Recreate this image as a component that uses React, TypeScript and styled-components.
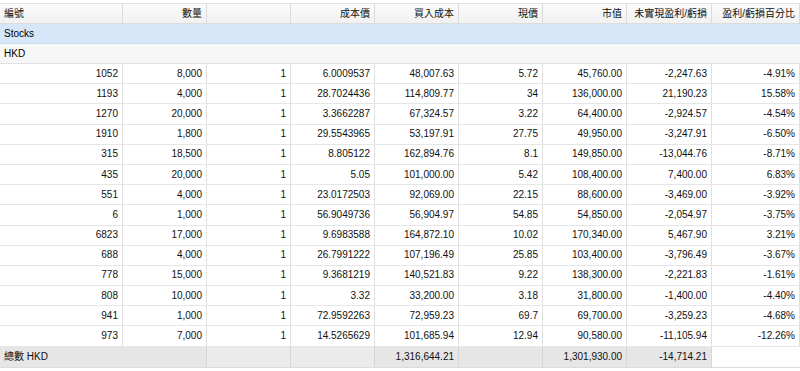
import styled, { createGlobalStyle } from "styled-components";

const GlobalStyle = createGlobalStyle`
  html, body {
    margin: 0;
    padding: 0;
    background: #ffffff;
  }
  body {
    font-family: "Liberation Sans", "Noto Sans CJK TC", sans-serif;
    font-size: 10px;
    color: #111111;
  }
`;

const COLUMNS = "123px 84px 84px 84px 84px 84px 84px 85px 88px";

const headers = [
  "編號",
  "數量",
  "",
  "成本價",
  "買入成本",
  "現價",
  "市值",
  "未實現盈利/虧損",
  "盈利/虧損百分比",
];

const rows: string[][] = [
  ["1052", "8,000", "1", "6.0009537", "48,007.63", "5.72", "45,760.00", "-2,247.63", "-4.91%"],
  ["1193", "4,000", "1", "28.7024436", "114,809.77", "34", "136,000.00", "21,190.23", "15.58%"],
  ["1270", "20,000", "1", "3.3662287", "67,324.57", "3.22", "64,400.00", "-2,924.57", "-4.54%"],
  ["1910", "1,800", "1", "29.5543965", "53,197.91", "27.75", "49,950.00", "-3,247.91", "-6.50%"],
  ["315", "18,500", "1", "8.805122", "162,894.76", "8.1", "149,850.00", "-13,044.76", "-8.71%"],
  ["435", "20,000", "1", "5.05", "101,000.00", "5.42", "108,400.00", "7,400.00", "6.83%"],
  ["551", "4,000", "1", "23.0172503", "92,069.00", "22.15", "88,600.00", "-3,469.00", "-3.92%"],
  ["6", "1,000", "1", "56.9049736", "56,904.97", "54.85", "54,850.00", "-2,054.97", "-3.75%"],
  ["6823", "17,000", "1", "9.6983588", "164,872.10", "10.02", "170,340.00", "5,467.90", "3.21%"],
  ["688", "4,000", "1", "26.7991222", "107,196.49", "25.85", "103,400.00", "-3,796.49", "-3.67%"],
  ["778", "15,000", "1", "9.3681219", "140,521.83", "9.22", "138,300.00", "-2,221.83", "-1.61%"],
  ["808", "10,000", "1", "3.32", "33,200.00", "3.18", "31,800.00", "-1,400.00", "-4.40%"],
  ["941", "1,000", "1", "72.9592263", "72,959.23", "69.7", "69,700.00", "-3,259.23", "-4.68%"],
  ["973", "7,000", "1", "14.5265629", "101,685.94", "12.94", "90,580.00", "-11,105.94", "-12.26%"],
];

const Page = styled.div`
  padding-top: 3px;
  width: 800px;
`;

const Grid = styled.div`
  border-top: 1px solid #e2e2e2;
`;

const Row = styled.div<{ $bg?: string; $h?: number; $line?: string }>`
  display: grid;
  grid-template-columns: ${COLUMNS};
  height: ${(p) => p.$h ?? 20}px;
  background: ${(p) => p.$bg ?? "#ffffff"};
  border-bottom: 1px solid ${(p) => p.$line ?? "#e6e6e6"};
  box-sizing: border-box;
`;

const HeaderRow = styled(Row)`
  background: linear-gradient(to bottom, #fbfbfb, #f1f1f1);
`;

const Cell = styled.div<{ $left?: boolean; $span?: number; $bg?: string; $noLine?: boolean }>`
  display: flex;
  align-items: center;
  justify-content: ${(p) => (p.$left ? "flex-start" : "flex-end")};
  padding: 0 4px;
  border-right: ${(p) => (p.$noLine ? "none" : "1px solid #e0e0e0")};
  grid-column: span ${(p) => p.$span ?? 1};
  background: ${(p) => p.$bg ?? "transparent"};
  white-space: nowrap;
  overflow: hidden;
  line-height: 1;
`;

const HeadCell = styled(Cell)`
  border-right-color: #dadada;
`;

const GroupCell = styled(Cell)`
  grid-column: 1 / -1;
  border-right: none;
  color: #000000;
`;

const TotalCell = styled(Cell)`
  border-right-color: #d6d6d6;
`;

export default function App() {
  return (
    <>
      <GlobalStyle />
      <Page>
        <Grid>
          <HeaderRow $line="#dcdcdc">
            {headers.map((h, i) => (
              <HeadCell key={i} $left={i === 0}>
                {h}
              </HeadCell>
            ))}
          </HeaderRow>
          <Row $bg="#d5e7f9" $line="#c9dcef">
            <GroupCell $left>Stocks</GroupCell>
          </Row>
          <Row $bg="#f7f7f7" $line="#e0e0e0">
            <GroupCell $left>HKD</GroupCell>
          </Row>
          {rows.map((r) => (
            <Row key={r[0]} $h={20.2}>
              {r.map((v, i) => (
                <Cell key={i}>{v}</Cell>
              ))}
            </Row>
          ))}
          <Row $bg="#ffffff" $h={21} $line="#dcdcdc">
            <TotalCell $left $span={2} $bg="#e6e6e6">
              總數 HKD
            </TotalCell>
            <TotalCell $bg="#ebebeb" />
            <TotalCell $bg="#ebebeb" />
            <TotalCell $bg="#e6e6e6">1,316,644.21</TotalCell>
            <TotalCell $bg="#e6e6e6" />
            <TotalCell $bg="#e6e6e6">1,301,930.00</TotalCell>
            <TotalCell $bg="#e6e6e6">-14,714.21</TotalCell>
            <TotalCell $noLine />
          </Row>
        </Grid>
      </Page>
    </>
  );
}
